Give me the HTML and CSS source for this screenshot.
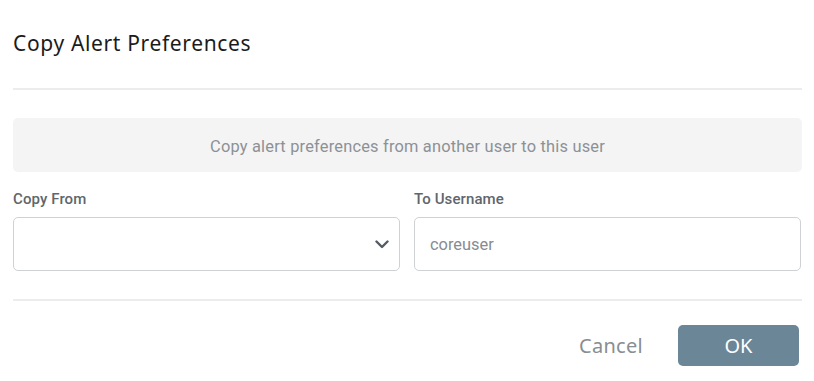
FILE: index.html
```html
<!DOCTYPE html>
<html>
<head>
<meta charset="utf-8">
<link rel="stylesheet" href="styles.css">
</head>
<body>
<div class="dialog">
  <h1 class="title">Copy Alert Preferences</h1>
  <div class="divider"></div>
  <div class="info">Copy alert preferences from another user to this user</div>
  <div class="fields">
    <div class="field">
      <label class="label">Copy From</label>
      <div class="control select">
        <svg class="chevron" width="14" height="9" viewBox="0 0 14 9"><path d="M1.5 1.5 L7 7 L12.5 1.5" fill="none" stroke="#545b63" stroke-width="2.4" stroke-linecap="round" stroke-linejoin="round"/></svg>
      </div>
    </div>
    <div class="field">
      <label class="label">To Username</label>
      <div class="control input">coreuser</div>
    </div>
  </div>
  <div class="divider bottom"></div>
  <div class="actions">
    <button class="btn cancel">Cancel</button>
    <button class="btn ok">OK</button>
  </div>
</div>
</body>
</html>
```
FILE: styles.css
```css
* { box-sizing: border-box; }
html, body { margin: 0; padding: 0; background: #fff; }
body { width: 814px; height: 381px; overflow: hidden; }
.dialog {
  padding: 0 13px 0 13px;
  font-family: Roboto, "Noto Sans", sans-serif;
}
.title {
  margin: 0;
  padding-top: 30px;
  height: 88px;
  font-family: "Noto Sans", "Open Sans", sans-serif;
  font-weight: 400;
  font-size: 21px;
  line-height: 27px;
  color: #1b1b1b;
  letter-spacing: 0.65px;
}
.divider {
  height: 2px;
  background: #ececec;
  width: 789px;
}
.info {
  margin-top: 28px;
  height: 54px;
  width: 789px;
  background: #f4f4f4;
  border-radius: 5px;
  display: flex;
  align-items: center;
  justify-content: center;
  font-size: 16.4px;
  letter-spacing: 0.2px;
  color: #8c9196;
  padding-top: 3px;
}
.fields {
  display: flex;
  gap: 14px;
  margin-top: 18px;
  width: 788px;
}
.field { flex: 1; display: flex; flex-direction: column; }
.label {
  font-size: 15px;
  font-weight: 500;
  color: #60666c;
  line-height: 18px;
  height: 27px;
  letter-spacing: 0.1px;
}
.control {
  height: 54px;
  border: 1px solid #cfd2d4;
  border-radius: 5px;
  display: flex;
  align-items: center;
}
.select { justify-content: flex-end; padding-right: 10px; }
.chevron { display: block; margin-top: 1px; }
.input {
  padding-left: 15px;
  font-size: 16.4px;
  color: #878c91;
}
.divider.bottom { margin-top: 28px; }
.actions {
  display: flex;
  justify-content: flex-end;
  align-items: center;
  gap: 35px;
  margin-top: 24px;
  width: 786px;
}
.btn {
  border: none;
  font-family: "Noto Sans", "Open Sans", sans-serif;
  font-size: 20px;
  cursor: pointer;
}
.cancel {
  background: none;
  color: #8a8d90;
  padding: 0;
  letter-spacing: 0.3px;
}
.ok {
  width: 121px;
  height: 41px;
  background: #6a8697;
  color: #fff;
  border-radius: 5px;
}
```
